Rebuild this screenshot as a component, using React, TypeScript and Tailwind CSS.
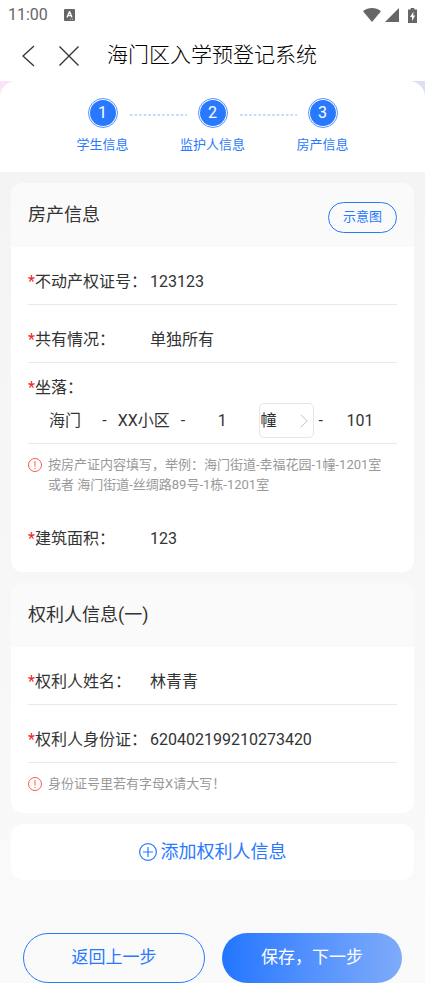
import { useState, type ReactNode } from "react";
import clsx from "clsx";

interface FieldProps {
  id: string;
  label: string;
  value: string;
  last?: boolean;
}

const steps = ["学生信息", "监护人信息", "房产信息"];

function Label({ id, children }: { id: string; children: ReactNode }) {
  return (
    <label htmlFor={id} className="block shrink-0 whitespace-nowrap">
      <span className="text-[#f5222d]">*</span>
      {children}
    </label>
  );
}

function Field({ id, label, value, last }: FieldProps) {
  const [text, setText] = useState(value);
  return (
    <div
      className={clsx(
        "flex items-center pt-[23px] pb-[10px]",
        !last && "border-b border-[#e9e9e9]"
      )}
    >
      <div className="w-[122px] shrink-0">
        <Label id={id}>{label}：</Label>
      </div>
      <input
        id={id}
        value={text}
        onChange={(e) => setText(e.target.value)}
        className="h-6 min-w-0 flex-1 bg-transparent outline-none"
      />
    </div>
  );
}

function AddressInput({ id, label, value }: FieldProps) {
  return (
    <input
      id={id}
      aria-label={label}
      defaultValue={value}
      className="h-6 w-0 min-w-0 flex-1 bg-transparent text-center outline-none"
    />
  );
}

function Hint({ children }: { children: ReactNode }) {
  return (
    <div className="flex gap-[6px] text-[13px] leading-5 text-[#999]">
      <svg viewBox="0 0 14 14" className="mt-[3px] size-[14px] shrink-0" fill="none">
        <circle cx="7" cy="7" r="6.5" stroke="#f5483b" strokeWidth="0.9" />
        <path d="M7 3v5.6M7 9.9v1.2" stroke="#f5483b" strokeWidth="0.9" />
      </svg>
      <p>{children}</p>
    </div>
  );
}

function Card({
  title,
  action,
  children,
}: {
  title: string;
  action?: ReactNode;
  children: ReactNode;
}) {
  return (
    <section className="overflow-hidden rounded-xl bg-white">
      <div className="flex h-16 items-center justify-between bg-[#fafafa] px-[17px]">
        <h2 className="text-lg">{title}</h2>
        {action}
      </div>
      <div className="px-[17px]">{children}</div>
    </section>
  );
}

function StatusBar() {
  return (
    <div className="flex h-[30px] items-center justify-between px-2 text-[#666]">
      <div className="flex items-center gap-4">
        <span className="text-base">11:00</span>
        <svg viewBox="0 0 11 12" className="h-3 w-[11px]">
          <rect width="11" height="12" rx="1" fill="#666" />
          <path d="M3 8.5 5.3 3h.5L8 8.5M3.9 6.7h3.2" stroke="#fff" strokeWidth="1.3" fill="none" />
          <path d="M6 10.3h1M8 10.3h1" stroke="#fff" strokeWidth="0.7" />
        </svg>
      </div>
      <div className="flex items-center">
        <svg viewBox="0 0 18 14" className="h-[14px] w-[18px]" fill="#666">
          <path d="M0 3.2C5.2-1 12.8-1 18 3.2L9 14z" />
        </svg>
        <svg viewBox="0 0 14 14" className="ml-1 h-[14px] w-[14px]" fill="#666">
          <path d="M14 0v14H0z" />
        </svg>
        <svg viewBox="0 0 9 15" className="ml-[9px] h-[15px] w-[9px]">
          <path d="M2.7 0h3.6v1.5H9V15H0V1.5h2.7z" fill="#666" />
          <path d="M5.6 3.5 2 9h2v4l3.2-5.5H5.2z" fill="#fff" />
        </svg>
      </div>
    </div>
  );
}

function NavBar() {
  return (
    <header className="flex h-[51px] items-center px-[22px] text-[#333]">
      <button type="button" aria-label="返回" className="flex">
        <svg viewBox="0 0 13 22" className="h-[22px] w-[13px]" fill="none">
          <path d="M12 1 1 11l11 10" stroke="currentColor" strokeWidth="1.3" />
        </svg>
      </button>
      <button type="button" aria-label="关闭" className="ml-6 flex">
        <svg viewBox="0 0 20 20" className="size-5" fill="none">
          <path d="m.5.5 19 19M19.500.5.5 19.500" stroke="currentColor" strokeWidth="1.300" />
        </svg>
      </button>
      <h1 className="ml-7 text-[21px] font-light text-black">海门区入学预登记系统</h1>
    </header>
  );
}

function Steps() {
  return (
    <div className="bg-linear-to-r from-[#fbe3fa] to-[#dcdff6]">
      <ol className="flex justify-center rounded-t-2xl bg-white pt-[17px] pb-[17px] text-[#2979ff]">
        {steps.map((step, i) => (
          <li key={step} className="relative flex w-[110px] flex-col items-center">
            <span className="flex size-[30px] items-center justify-center rounded-full border border-[#2979ff]/80 p-px">
              <span className="flex size-full items-center justify-center rounded-full bg-[#2979ff] text-base text-white">
                {i + 1}
              </span>
            </span>
            <span className="mt-[7px] text-[13px] leading-5">{step}</span>
            {i < steps.length - 1 && (
              <svg viewBox="0 0 57 2" className="absolute top-4 left-[82px] h-[2px] w-[57px]">
                <path d="M0 1h57" stroke="#c3dafd" strokeWidth="2" strokeDasharray="2.500 2.100" />
              </svg>
            )}
          </li>
        ))}
      </ol>
    </div>
  );
}

export default function App() {
  const [unit, setUnit] = useState("幢");

  return (
    <div className="min-h-screen bg-white font-['Roboto','Noto_Sans_CJK_SC',sans-serif] text-base text-[#333]">
      <StatusBar />
      <NavBar />
      <Steps />
      <form
        className="bg-linear-to-b from-[#f4f4f4] to-[#fafafa] px-[11px] pt-[11px]"
        onSubmit={(e) => e.preventDefault()}
      >
        <div className="flex flex-col gap-[11px]">
          <Card
            title="房产信息"
            action={
              <button
                type="button"
                className="mt-1 h-[31px] rounded-full border border-[#2979ff] px-[14px] text-[13px] text-[#2979ff]"
              >
                示意图
              </button>
            }
          >
            <Field id="certNo" label="不动产权证号" value="123123" />
            <Field id="share" label="共有情况" value="单独所有" />
            <div className="border-b border-[#e9e9e9] pt-[13px] pb-[5px]">
              <Label id="town">坐落：</Label>
              <div className="mt-[3px] flex items-center">
                <AddressInput id="town" label="街道" value="海门" />
                <span>-</span>
                <AddressInput id="estate" label="小区" value="XX小区" />
                <span>-</span>
                <AddressInput id="building" label="楼号" value="1" />
                <div className="relative mr-1 w-[55px]">
                  <select
                    aria-label="单位"
                    value={unit}
                    onChange={(e) => setUnit(e.target.value)}
                    className="block h-[35px] w-full appearance-none rounded-[5px] border border-[#e6e6e6] bg-white outline-none"
                  >
                    <option>幢</option>
                    <option>栋</option>
                  </select>
                  <svg
                    viewBox="0 0 8 14"
                    className="pointer-events-none absolute top-[11px] right-[6px] h-[14px] w-2"
                    fill="none"
                  >
                    <path d="m.7.7 6.500 6.300L.7 13.300" stroke="#c4c4c4" />
                  </svg>
                </div>
                <span>-</span>
                <AddressInput id="room" label="室号" value="101" />
              </div>
            </div>
            <div className="pt-[11px]">
              <Hint>
                按房产证内容填写，举例：海门街道-幸福花园-1幢-1201室
                <br />
                或者 海门街道-丝绸路89号-1栋-1201室
              </Hint>
            </div>
            <div className="pt-[9px] pb-[11px]">
              <Field id="area" label="建筑面积" value="123" last />
            </div>
          </Card>

          <Card title="权利人信息(一)">
            <Field id="ownerName" label="权利人姓名" value="林青青" />
            <Field id="ownerId" label="权利人身份证" value="620402199210273420" />
            <div className="pt-[11px] pb-[19px]">
              <Hint>身份证号里若有字母X请大写！</Hint>
            </div>
          </Card>

          <button
            type="button"
            className="flex h-14 w-full items-center justify-center gap-1 rounded-xl bg-white text-lg text-[#2979ff]"
          >
            <svg viewBox="0 0 18 18" className="size-[18px]" fill="none" stroke="currentColor">
              <circle cx="9" cy="9" r="8.4" strokeWidth="1.2" />
              <path d="M9 4v10M4 9h10" strokeWidth="1.2" />
            </svg>
            添加权利人信息
          </button>
        </div>

        <div className="flex gap-[17px] px-3 pt-[53px]">
          <button
            type="button"
            className="h-[50px] flex-1 rounded-full border border-[#2979ff] text-[17px] text-[#2979ff]"
          >
            返回上一步
          </button>
          <button
            type="submit"
            className="h-[50px] flex-1 rounded-full bg-linear-to-r from-[#2175ff] to-[#7eabfa] text-[17px] text-white"
          >
            保存，下一步
          </button>
        </div>
      </form>
    </div>
  );
}
